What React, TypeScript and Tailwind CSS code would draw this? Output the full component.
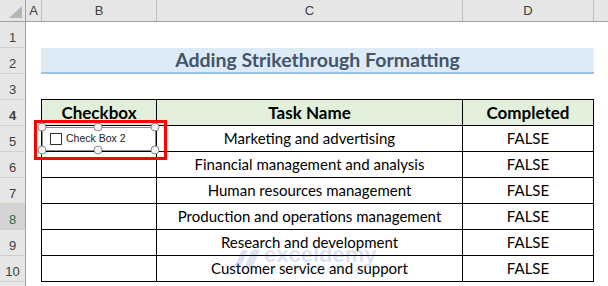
import React from "react";

const tasks = [
  "Marketing and advertising",
  "Financial management and analysis",
  "Human resources management",
  "Production and operations management",
  "Research and development",
  "Customer service and support",
];

const font = "font-['Lato','Liberation_Sans',sans-serif]";

function RowHead({ n, active }: { n?: number; active?: boolean }) {
  return (
    <div
      className={`flex h-full w-[26px] shrink-0 items-end justify-center border-r border-b border-r-[#a0a0a0] border-b-[#cfcfcf] pb-[3px] text-[13px] leading-none ${
        active ? "bg-[#d4d4d4] text-[#2f6b45]" : "bg-[#e6e6e6] text-[#404040]"
      } font-['Liberation_Sans',sans-serif]`}
    >
      {n}
    </div>
  );
}

function CheckControl() {
  return (
    <div className="absolute left-[34px] top-[120px] h-[40px] w-[133px] border-[3px] border-[#ff0000]">
      <div className="absolute left-[5px] top-[4px] flex h-[24px] w-[114px] items-center border border-[#8c8c8c] bg-white pl-[7px]">
        <div className="h-[12px] w-[12px] border border-[#333333] bg-white" />
        <span className="ml-[4px] font-['Liberation_Sans',sans-serif] text-[10.5px] text-[#222]">
          Check Box 2
        </span>
      </div>
      {[
        [5, 4],
        [61, 4],
        [118, 4],
        [5, 27],
        [61, 27],
        [118, 27],
      ].map(([x, y], i) => (
        <div
          key={i}
          className="absolute h-[9px] w-[9px] -translate-x-1/2 -translate-y-1/2 rounded-full border-[1.5px] border-[#8a8a8a] bg-[#f2f2f2]"
          style={{ left: x, top: y }}
        />
      ))}
    </div>
  );
}

export default function App() {
  return (
    <div className={`relative h-[286px] w-[608px] overflow-hidden bg-white ${font}`}>
      {/* column letters */}
      <div className="flex h-[22px] border-b border-[#9f9f9f] bg-[#e6e6e6] font-['Liberation_Sans',sans-serif] text-[13px] text-[#404040]">
        <div className="relative w-[26px] shrink-0 border-r border-[#a0a0a0]">
          <svg className="absolute left-[9px] top-[6px]" width="13" height="12" viewBox="0 0 13 12">
            <polygon points="13,0 13,12 0,12" fill="#b5b5b5" />
          </svg>
        </div>
        <div className="flex w-[16px] shrink-0 items-center justify-center border-r border-[#c0c0c0]">A</div>
        <div className="flex w-[115px] shrink-0 items-center justify-center border-r border-[#c0c0c0]">B</div>
        <div className="flex w-[306px] shrink-0 items-center justify-center border-r border-[#c0c0c0]">C</div>
        <div className="flex w-[131px] shrink-0 items-center justify-center border-r border-[#c0c0c0]">D</div>
        <div className="flex-1" />
      </div>

      {/* row 1 */}
      <div className="flex h-[26px]">
        <RowHead n={1} />
      </div>

      {/* row 2: title */}
      <div className="flex h-[26px]">
        <RowHead n={2} />
        <div className="w-[15px] shrink-0" />
        <div className="flex w-[553px] shrink-0 items-center justify-center border-b-2 border-[#9bc2e6] bg-[#ddebf7] text-[19.5px] font-bold text-[#44546a]">
          Adding Strikethrough Formatting
        </div>
      </div>

      {/* row 3 */}
      <div className="flex h-[26px]">
        <RowHead n={3} />
        <div className="w-[15px] shrink-0" />
        <div className="w-[553px] shrink-0 border-b border-black" />
      </div>

      {/* row 4: table header */}
      <div className="flex h-[26px] text-[17px] font-bold text-black">
        <RowHead n={4} />
        <div className="w-[15px] shrink-0" />
        <div className="flex w-[116px] shrink-0 items-center justify-center border-x border-b border-black bg-[#e2efda]">
          Checkbox
        </div>
        <div className="flex w-[306px] shrink-0 items-center justify-center border-r border-b border-black bg-[#e2efda]">
          Task Name
        </div>
        <div className="flex w-[131px] shrink-0 items-center justify-center border-r border-b border-black bg-[#e2efda]">
          Completed
        </div>
      </div>

      {/* rows 5-10 */}
      {tasks.map((t, i) => (
        <div key={t} className="flex h-[26px] text-[15px] text-black">
          <RowHead n={i + 5} active={i + 5 === 8} />
          <div className="w-[15px] shrink-0" />
          <div className="w-[116px] shrink-0 border-x border-b border-black" />
          <div className="flex w-[306px] shrink-0 items-center justify-center border-r border-b border-black">
            {t}
          </div>
          <div className="flex w-[131px] shrink-0 items-center justify-center border-r border-b border-black">
            FALSE
          </div>
        </div>
      ))}

      {/* row 11, only its top edge shows */}
      <div className="flex h-[26px]">
        <RowHead />
      </div>

      {/* faint site mark */}
      <div className="pointer-events-none absolute left-[234px] top-[244px] flex items-center gap-[4px] opacity-[0.16]">
        <svg width="26" height="18" viewBox="0 0 26 18">
          <polygon points="0,18 8,0 14,0 6,18" fill="#2d4fbf" />
          <polygon points="10,18 18,0 26,0 18,18" fill="#2d4fbf" />
        </svg>
        <div className="flex flex-col items-center leading-none">
          <span className="font-['Liberation_Sans',sans-serif] text-[22px] font-bold text-[#2d4fbf]">exceldemy</span>
          <span className="mt-[1px] font-['Liberation_Sans',sans-serif] text-[7px] tracking-[2px] text-[#555]">
            EXCEL · DATA · BI
          </span>
        </div>
      </div>

      <CheckControl />
    </div>
  );
}
